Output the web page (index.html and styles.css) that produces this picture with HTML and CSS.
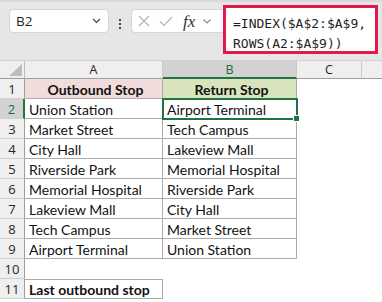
FILE: index.html
```html
<!DOCTYPE html>
<html>
<head>
<meta charset="utf-8">
<link rel="stylesheet" href="styles.css">
</head>
<body>
<div class="toolbar">
  <div class="namebox">
    <span class="nb-text">B2</span>
    <svg class="chev" width="9" height="6" viewBox="0 0 9 6"><path d="M1 1 L4.5 4.5 L8 1" fill="none" stroke="#444" stroke-width="1.2"/></svg>
  </div>
  <div class="dots"><i></i><i></i><i></i></div>
  <div class="fxbox">
    <svg class="ico" width="12" height="12" viewBox="0 0 12 12"><path d="M1 1 L11 11 M11 1 L1 11" stroke="#b4b4b4" stroke-width="1.2" fill="none"/></svg>
    <svg class="ico chk" width="14" height="11" viewBox="0 0 14 11"><path d="M1 5.5 L5 9.5 L13 1" stroke="#b4b4b4" stroke-width="1.2" fill="none"/></svg>
    <span class="fx">fx</span>
    <svg class="chev2" width="8" height="5" viewBox="0 0 8 5"><path d="M0.5 0.5 L4 4 L7.5 0.5" fill="none" stroke="#888" stroke-width="1.1"/></svg>
  </div>
  <div class="formula">=INDEX($A$2:$A$9,<br>ROWS(A2:$A$9))</div>
</div>
<div class="sheet">
  <div class="corner"><svg width="13" height="12" viewBox="0 0 13 12"><path d="M13 0 L13 12 L0 12 Z" fill="#bdbdbd"/></svg></div>
  <div class="ch">A</div>
  <div class="ch sel">B</div>
  <div class="ch">C</div>
  <div class="ch last"></div>

  <div class="rh">1</div>
  <div class="c t hA">Outbound Stop</div>
  <div class="c t hB">Return Stop</div>
  <div class="c"></div><div class="c"></div>

  <div class="rh sel">2</div>
  <div class="c t">Union Station</div>
  <div class="c t cur">Airport Terminal<span class="selbox"><span class="handle"></span></span></div>
  <div class="c"></div><div class="c"></div>

  <div class="rh">3</div>
  <div class="c t">Market Street</div>
  <div class="c t">Tech Campus</div>
  <div class="c"></div><div class="c"></div>

  <div class="rh">4</div>
  <div class="c t">City Hall</div>
  <div class="c t">Lakeview Mall</div>
  <div class="c"></div><div class="c"></div>

  <div class="rh">5</div>
  <div class="c t">Riverside Park</div>
  <div class="c t">Memorial Hospital</div>
  <div class="c"></div><div class="c"></div>

  <div class="rh">6</div>
  <div class="c t">Memorial Hospital</div>
  <div class="c t">Riverside Park</div>
  <div class="c"></div><div class="c"></div>

  <div class="rh">7</div>
  <div class="c t">Lakeview Mall</div>
  <div class="c t">City Hall</div>
  <div class="c"></div><div class="c"></div>

  <div class="rh">8</div>
  <div class="c t">Tech Campus</div>
  <div class="c t">Market Street</div>
  <div class="c"></div><div class="c"></div>

  <div class="rh">9</div>
  <div class="c t">Airport Terminal</div>
  <div class="c t">Union Station</div>
  <div class="c"></div><div class="c"></div>

  <div class="rh">10</div>
  <div class="c"></div><div class="c"></div><div class="c"></div><div class="c"></div>

  <div class="rh">11</div>
  <div class="c t b">Last outbound stop</div>
  <div class="c"></div><div class="c"></div><div class="c"></div>
</div>
</body>
</html>
```

FILE: styles.css
```css
* { box-sizing: border-box; }
html, body { margin: 0; padding: 0; background: #fff; }
body { width: 382px; height: 302px; overflow: hidden; font-family: "Open Sans", "Noto Sans", sans-serif; }

.toolbar {
  height: 61px;
  background: #e6e6e6;
  border-top: 2px solid #dadada;
  display: flex;
  align-items: flex-start;
}
.namebox {
  margin: 7px 0 0 9px;
  width: 100px;
  height: 24px;
  background: #fff;
  border: 1px solid #d6d6d6;
  border-radius: 4px;
  display: flex;
  align-items: center;
  justify-content: space-between;
  padding: 0 7px 0 6px;
}
.nb-text { font-size: 13.5px; color: #1f1f1f; }
.chev { display: block; }
.dots {
  margin: 17px 0 0 10px;
  width: 3px;
  display: flex;
  flex-direction: column;
  gap: 2px;
}
.dots i { display: block; width: 2px; height: 2px; background: #444; }
.fxbox {
  margin: 7px 0 0 9px;
  width: 92px;
  height: 24px;
  background: #fff;
  border: 1px solid #d6d6d6;
  border-right: none;
  border-radius: 4px 0 0 4px;
  display: flex;
  align-items: center;
  padding-left: 6px;
}
.ico { display: block; }
.chk { margin-left: 9px; }
.fx {
  margin-left: 10px;
  font-family: "Liberation Serif", serif;
  font-style: italic;
  font-size: 17px;
  color: #333;
  line-height: 1;
}
.chev2 { display: block; margin-left: 8px; }
.formula {
  margin-top: 3px;
  width: 155px;
  height: 49px;
  background: #fff;
  border: 3px solid #e3194b;
  padding: 6px 0 0 7px;
  font-family: "DejaVu Sans Mono", "Liberation Mono", monospace;
  font-size: 13px;
  line-height: 20px;
  color: #1f1f1f;
  overflow: hidden;
  white-space: nowrap;
}

.sheet {
  display: grid;
  grid-template-columns: 25px 138px 134px 65px 1fr;
  grid-template-rows: 18px;
  grid-auto-rows: 20px;
  border-top: 1px solid #d0d0d0;
  margin-top: -1px;
}
.corner, .ch, .rh {
  background: #efefef;
  font-size: 12.5px;
  color: #262626;
  display: flex;
  align-items: center;
  justify-content: center;
}
.corner {
  border-right: 1px solid #bcbcbc;
  border-bottom: 1px solid #9e9e9e;
  align-items: flex-end;
  justify-content: flex-end;
  padding: 0 2px 2px 0;
}
.corner svg { display: block; }
.ch {
  border-right: 1px solid #cbcbcb;
  border-bottom: 1px solid #9e9e9e;
}
.ch.last { border-right: none; }
.ch.sel {
  background: #d2d2d2;
  color: #1b6b3f;
  border-bottom: 2px solid #217346;
}
.rh {
  border-right: 1px solid #9e9e9e;
  border-bottom: 1px solid #d0d0d0;
  font-size: 13px;
}
.rh.sel {
  background: #d2d2d2;
  color: #1b6b3f;
  border-right: 2px solid #217346;
}
.c {
  font-family: "Lato", "Liberation Sans", sans-serif;
  font-size: 14px;
  color: #111;
  padding: 1px 0 0 4px;
  display: flex;
  align-items: center;
  white-space: nowrap;
}
.t {
  border-right: 1px solid #ababab;
  border-bottom: 1px solid #ababab;
}
.hA { background: #f2dcdb; font-weight: bold; justify-content: center; }
.hB { background: #d8e4bc; font-weight: bold; justify-content: center; }
.b { font-weight: bold; border-top: 1px solid #ababab; }

.cur { position: relative; }
.selbox {
  position: absolute;
  left: -1px;
  top: -1px;
  right: -2px;
  bottom: -2px;
  border: 2px solid #217346;
  pointer-events: none;
}
.handle {
  position: absolute;
  right: -4px;
  bottom: -4px;
  width: 7px;
  height: 7px;
  background: #217346;
  border: 1px solid #fff;
}
```
